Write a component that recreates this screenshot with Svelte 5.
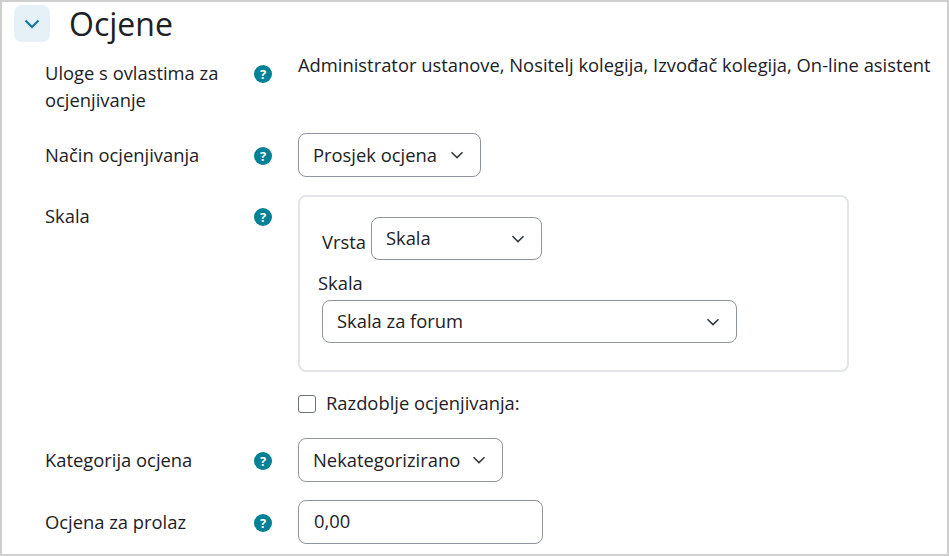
<script>
	const roles = "Administrator ustanove, Nositelj kolegija, Izvođač kolegija, On-line asistent";
</script>

{#snippet chevron()}
	<svg class="chevron" viewBox="0 0 14 8" width="14" height="8" aria-hidden="true">
		<path d="M1.5 1.2 7 6.6l5.5-5.4" fill="none" stroke="currentColor" stroke-width="1.6" />
	</svg>
{/snippet}

{#snippet help()}
	<span class="help">?</span>
{/snippet}

<div class="frame">
	<header class="section-head">
		<button class="toggle" aria-label="Sažmi">
			<svg viewBox="0 0 16 10" width="16" height="10" aria-hidden="true">
				<path d="M1.5 1.5 8 8l6.5-6.5" fill="none" stroke="currentColor" stroke-width="2" />
			</svg>
		</button>
		<h2>Ocjene</h2>
	</header>

	<div class="row roles">
		<div class="label">Uloge s ovlastima za ocjenjivanje</div>
		<div class="help-cell">{@render help()}</div>
		<div class="value">{roles}</div>
	</div>

	<div class="row method">
		<div class="label">Način ocjenjivanja</div>
		<div class="help-cell">{@render help()}</div>
		<div class="select w-method">Prosjek ocjena {@render chevron()}</div>
	</div>

	<div class="row scale">
		<div class="label">Skala</div>
		<div class="help-cell">{@render help()}</div>
		<fieldset class="group">
			<div class="type-line">
				<span class="type-label">Vrsta</span>
				<div class="select w-type">Skala {@render chevron()}</div>
			</div>
			<div class="scale-label">Skala</div>
			<div class="select w-scale">Skala za forum {@render chevron()}</div>
		</fieldset>
	</div>

	<div class="row period">
		<div class="label"></div>
		<div class="help-cell"></div>
		<label class="check"><input type="checkbox" /> <span class="check-text">Razdoblje ocjenjivanja:</span></label>
	</div>

	<div class="row category">
		<div class="label">Kategorija ocjena</div>
		<div class="help-cell">{@render help()}</div>
		<div class="select w-category">Nekategorizirano {@render chevron()}</div>
	</div>

	<div class="row pass">
		<div class="label">Ocjena za prolaz</div>
		<div class="help-cell">{@render help()}</div>
		<input class="text-input" type="text" value="0,00" />
	</div>
</div>

<style>
	:global(body) {
		background: #fff;
		margin: 0;
	}

	.frame {
		border: 2px solid #cfcfcf;
		box-sizing: border-box;
		color: #1d2125;
		font-family: "Open Sans", sans-serif;
		font-size: 18.36px;
		height: 556px;
		line-height: 27px;
		overflow: hidden;
		padding: 3px 0 0 12px;
		width: 949px;
	}

	.section-head {
		align-items: center;
		display: flex;
		gap: 19px;
		height: 37px;
	}

	.toggle {
		align-items: center;
		background: #e5f0f7;
		border: none;
		border-radius: 8px;
		color: #1273a9;
		display: flex;
		height: 37px;
		justify-content: center;
		padding: 0;
		width: 36px;
	}

	h2 {
		color: #1d2125;
		font-size: 32px;
		font-weight: 400;
		line-height: 37px;
		margin: 0;
	}

	.row {
		display: flex;
		padding-left: 31px;
	}

	.label {
		margin-top: -1px;
		width: 209px;
	}

	.help-cell {
		align-items: center;
		display: flex;
		height: 27px;
		width: 44px;
	}

	.help {
		align-items: center;
		background: #008196;
		border-radius: 50%;
		color: #fff;
		display: flex;
		font-size: 13px;
		font-weight: 700;
		height: 18px;
		justify-content: center;
		line-height: 18px;
		width: 18px;
	}

	.roles {
		margin-top: 18px;
	}

	.value {
		margin-top: -9px;
		white-space: nowrap;
	}

	.method {
		margin-top: 20px;
	}

	.method .help-cell, .category .help-cell, .pass .help-cell {
		margin-top: 9px;
	}

	.method .label, .category .label, .pass .label {
		margin-top: 8px;
	}

	.select {
		align-items: center;
		background: #fff;
		border: 1px solid #8f959e;
		border-radius: 8px;
		box-sizing: border-box;
		display: flex;
		height: 44px;
		justify-content: space-between;
		padding: 0 16px 2px 14px;
	}

	.chevron {
		color: #343a40;
		flex: none;
		margin-top: 2px;
	}

	.w-method {
		width: 183px;
	}

	.scale {
		margin-top: 18px;
	}

	.scale .help-cell {
		margin-top: 8px;
	}

	.scale .label {
		margin-top: 7px;
	}

	.group {
		border: 2px solid #e3e5e8;
		border-radius: 8px;
		box-sizing: border-box;
		height: 177px;
		margin: 0;
		padding: 20px 0 0 18px;
		width: 551px;
	}

	.type-line {
		align-items: center;
		display: flex;
		gap: 5px;
		margin-left: 4px;
	}

	.type-label {
		margin-top: 6px;
	}

	.w-type {
		height: 43px;
		width: 171px;
	}

	.scale-label {
		margin-bottom: 1px;
		margin-top: 9px;
	}

	.w-scale {
		height: 43px;
		margin-left: 4px;
		margin-top: 4px;
		width: 415px;
	}

	.period {
		margin-top: 18px;
	}

	.check {
		align-items: center;
		display: flex;
		gap: 10px;
	}

	.check-text {
		margin-top: -2px;
	}

	.check input {
		appearance: none;
		border: 1px solid #6a737b;
		border-radius: 3px;
		height: 18px;
		margin: 0;
		width: 18px;
	}

	.category {
		margin-top: 21px;
	}

	.w-category {
		width: 205px;
	}

	.pass {
		margin-top: 18px;
	}

	.text-input {
		border: 1px solid #8f959e;
		border-radius: 8px;
		box-sizing: border-box;
		color: #1d2125;
		font: inherit;
		height: 44px;
		padding: 0 15px 3px;
		width: 245px;
	}
</style>
